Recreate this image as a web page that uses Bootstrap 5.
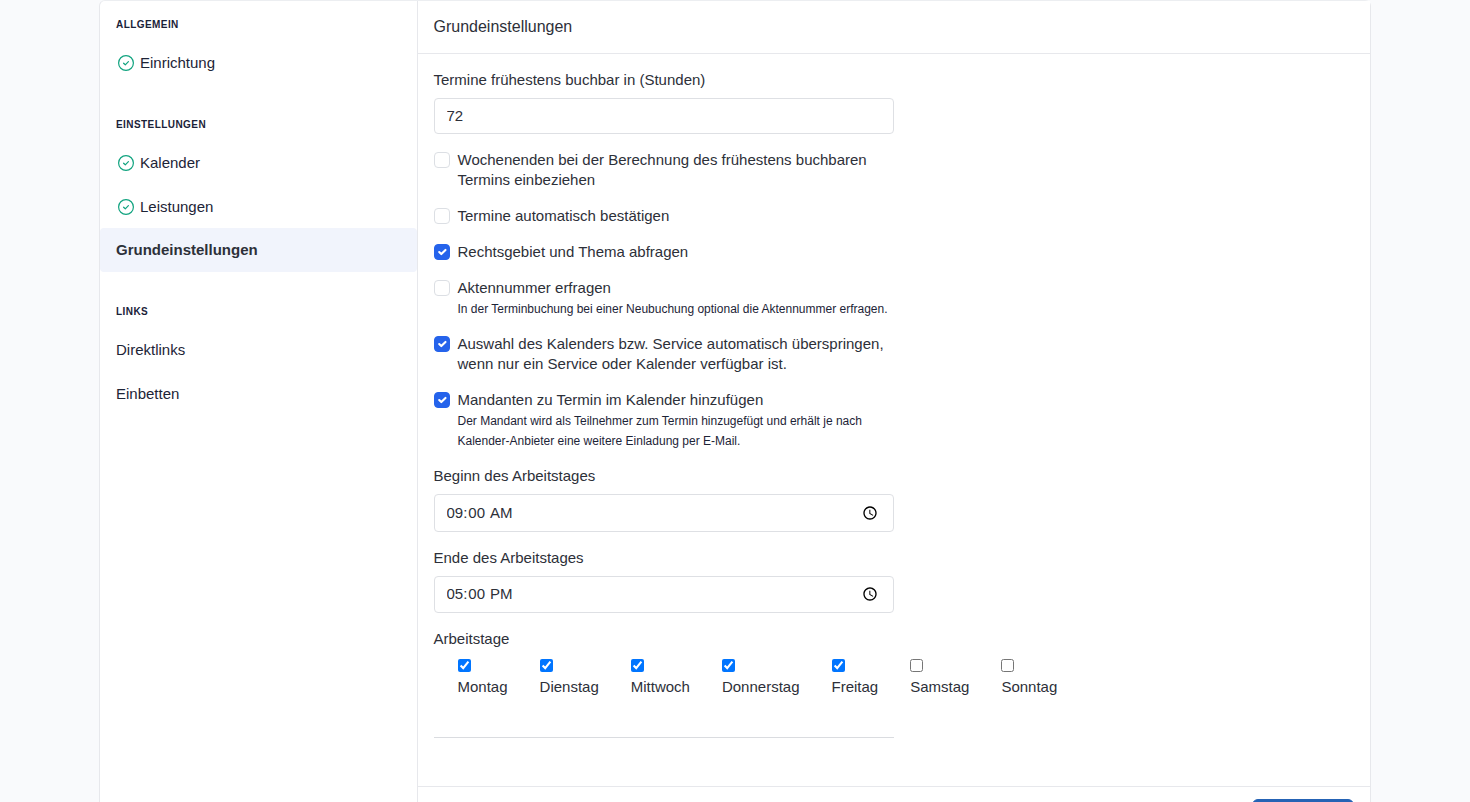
<!DOCTYPE html>
<html lang="de">
<head>
<meta charset="utf-8">
<title>Grundeinstellungen</title>
<link href="https://cdn.jsdelivr.net/npm/bootstrap@5.3.0/dist/css/bootstrap.min.css" rel="stylesheet">
<style>
html,body{height:100%;overflow:hidden}
body{background:#f9fafc;font-family:"Liberation Sans",Arial,sans-serif;font-size:15px;line-height:20px;color:#2d3039}
.shell{width:1272px;margin:0 0 0 99px}
.panel{border:1px solid #e7e8ec;border-top-color:#eceef1;border-radius:6px;background:#fff;flex-direction:row;display:flex;min-height:900px}
.side{width:318px;flex:none;border-right:1px solid #e7e8ec}
.side-head{font-size:10px;font-weight:700;letter-spacing:.43px;color:#1a2238;line-height:20px;padding:14px 16px 0;margin:0 0 5px;text-transform:uppercase}
.side-head.later{padding-top:0;margin:31px 0 5px}
.side-head.later.low{margin:30px 0 6px}
.side-item{display:flex;align-items:center;height:44px;padding:0 16px;color:#1d2437;text-decoration:none;font-size:15px;gap:6px}
.side-item.tick{padding-top:2px}
.side-item svg{margin-left:2px;flex:none}
.side-item.on{background:#f1f4fc;font-weight:700;color:#2d3039;border-radius:4px}
.main{flex:1;min-width:0;display:flex;flex-direction:column}
.main-top{background:#fff;border-bottom:1px solid #e7e8ec;padding:16px 16px 16px 15.5px;line-height:20px;height:53px;font-size:16px;color:#2d3039}
.main-body{padding:16px 16px 16px 15.5px;height:732px}
.form-col{width:460px}
.form-col .form-label{font-size:15px;line-height:20px;margin-bottom:8px;display:block}
.form-col .form-control{font-size:15px;line-height:20px;padding:6px 12px 8px;border-color:#dee0e4;border-radius:4px;color:#2d3039;height:36px}
.form-col .time-in{height:38px;padding:7px 12px}
.form-col .time-in.end{height:37px;padding:6px 12px 7px}
.chk{display:flex;gap:8px;margin-bottom:16px;padding:0;min-height:0}
.chk .form-check-input{width:16px;height:16px;margin:2px 0 0;float:none;flex:none;border-color:#dcdfe4;border-radius:4px}
.chk .form-check-input:checked{background-color:#2563eb;border-color:#2563eb}
.chk .form-check-label{line-height:20px}
.chk small{display:block;font-size:12px;line-height:20px;color:#1d2437;padding-top:1px;margin-bottom:-1px}
.block{margin-bottom:16px}
.days{display:flex;flex-wrap:nowrap;gap:32px;padding-left:24px;width:max-content;margin-top:-1px}
.day{display:flex;flex-direction:column;align-items:flex-start}
.day input{margin:3px 0 0;width:13px;height:13px}
.day label{margin-top:3px;line-height:24px}
.rule{width:460px;border-top:1px solid #dadce0;opacity:1;margin:38px 0 0}
.main-foot{background:#fff;border-top:1px solid #e7e8ec;padding:12px 16px;display:flex;justify-content:flex-end}
.save{background:#2563b5;border-color:#2563b5;width:102px;height:38px;font-size:15px;border-radius:6px}
</style>
</head>
<body>
<div class="shell">
  <div class="card panel">
    <aside class="side">
      <h6 class="side-head">Allgemein</h6>
      <a class="side-item tick" href="#"><svg width="16" height="16" viewBox="0 0 16 16" fill="none" stroke="#10a37f" stroke-width="1.2" stroke-linecap="round" stroke-linejoin="round"><circle cx="8" cy="8" r="7.4"/><path d="M5.6 8.2l1.7 1.6 3.1-3.2"/></svg>Einrichtung</a>
      <h6 class="side-head later">Einstellungen</h6>
      <a class="side-item tick" href="#"><svg width="16" height="16" viewBox="0 0 16 16" fill="none" stroke="#10a37f" stroke-width="1.2" stroke-linecap="round" stroke-linejoin="round"><circle cx="8" cy="8" r="7.4"/><path d="M5.6 8.2l1.7 1.6 3.1-3.2"/></svg>Kalender</a>
      <a class="side-item tick" href="#"><svg width="16" height="16" viewBox="0 0 16 16" fill="none" stroke="#10a37f" stroke-width="1.2" stroke-linecap="round" stroke-linejoin="round"><circle cx="8" cy="8" r="7.4"/><path d="M5.6 8.2l1.7 1.6 3.1-3.2"/></svg>Leistungen</a>
      <a class="side-item on" href="#">Grundeinstellungen</a>
      <h6 class="side-head later low">Links</h6>
      <a class="side-item" href="#">Direktlinks</a>
      <a class="side-item" href="#">Einbetten</a>
    </aside>
    <div class="main">
      <div class="main-top">Grundeinstellungen</div>
      <div class="main-body">
        <div class="form-col">
          <div class="block">
            <label class="form-label" for="f1">Termine frühestens buchbar in (Stunden)</label>
            <input class="form-control" id="f1" type="text" value="72">
          </div>
          <div class="form-check chk"><input class="form-check-input" type="checkbox" id="c1"><label class="form-check-label" for="c1">Wochenenden bei der Berechnung des frühestens buchbaren Termins einbeziehen</label></div>
          <div class="form-check chk"><input class="form-check-input" type="checkbox" id="c2"><label class="form-check-label" for="c2">Termine automatisch bestätigen</label></div>
          <div class="form-check chk"><input class="form-check-input" type="checkbox" id="c3" checked><label class="form-check-label" for="c3">Rechtsgebiet und Thema abfragen</label></div>
          <div class="form-check chk"><input class="form-check-input" type="checkbox" id="c4"><label class="form-check-label" for="c4">Aktennummer erfragen<small>In der Terminbuchung bei einer Neubuchung optional die Aktennummer erfragen.</small></label></div>
          <div class="form-check chk"><input class="form-check-input" type="checkbox" id="c5" checked><label class="form-check-label" for="c5">Auswahl des Kalenders bzw. Service automatisch überspringen, wenn nur ein Service oder Kalender verfügbar ist.</label></div>
          <div class="form-check chk"><input class="form-check-input" type="checkbox" id="c6" checked><label class="form-check-label" for="c6">Mandanten zu Termin im Kalender hinzufügen<small>Der Mandant wird als Teilnehmer zum Termin hinzugefügt und erhält je nach Kalender-Anbieter eine weitere Einladung per E-Mail.</small></label></div>
          <div class="block">
            <label class="form-label" for="t1">Beginn des Arbeitstages</label>
            <input class="form-control time-in" id="t1" type="time" value="09:00">
          </div>
          <div class="block">
            <label class="form-label" for="t2">Ende des Arbeitstages</label>
            <input class="form-control time-in end" id="t2" type="time" value="17:00">
          </div>
          <div class="block">
            <label class="form-label" for="d1">Arbeitstage</label>
            <div class="days">
              <div class="day"><input type="checkbox" id="d1" checked><label for="d1">Montag</label></div>
              <div class="day"><input type="checkbox" id="d2" checked><label for="d2">Dienstag</label></div>
              <div class="day"><input type="checkbox" id="d3" checked><label for="d3">Mittwoch</label></div>
              <div class="day"><input type="checkbox" id="d4" checked><label for="d4">Donnerstag</label></div>
              <div class="day"><input type="checkbox" id="d5" checked><label for="d5">Freitag</label></div>
              <div class="day"><input type="checkbox" id="d6"><label for="d6">Samstag</label></div>
              <div class="day"><input type="checkbox" id="d7"><label for="d7">Sonntag</label></div>
            </div>
          </div>
          <hr class="rule">
        </div>
      </div>
      <div class="main-foot"><button class="btn btn-primary save" type="button">Speichern</button></div>
    </div>
  </div>
</div>
</body>
</html>
